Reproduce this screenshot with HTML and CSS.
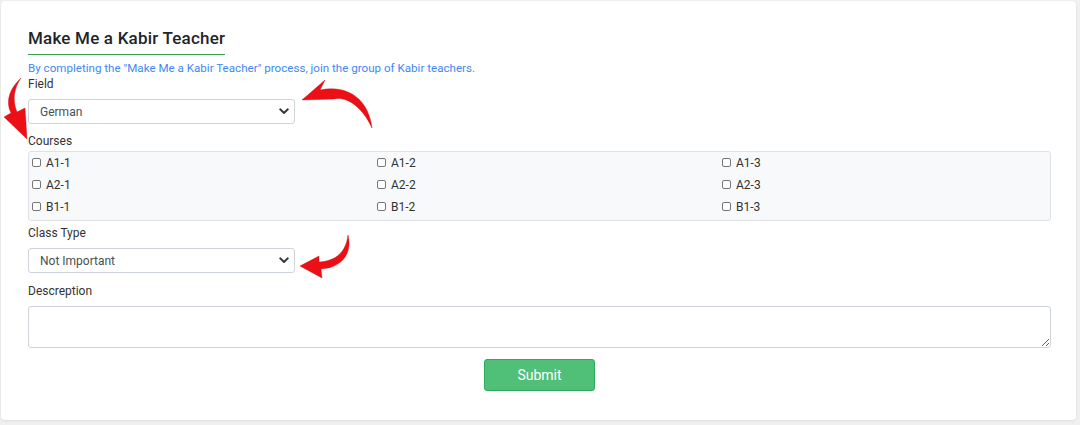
FILE: index.html
```html
<!DOCTYPE html>
<html lang="en">
<head>
    <meta charset="UTF-8">
    <meta name="viewport" content="width=device-width, initial-scale=1.0">
    <title>Make Me a Kabir Teacher</title>
    <link rel="stylesheet" href="styles.css">
</head>
<body>
    <div class="card">
        <h2 class="title">Make Me a Kabir Teacher</h2>
        <p class="intro">By completing the "Make Me a Kabir Teacher" process, join the group of Kabir teachers.</p>

        <form class="teacher-form">
            <label class="field-label">Field</label>
            <div class="select-wrap">
                <select class="form-select">
                    <option>German</option>
                </select>
                <svg class="chevron" width="10" height="7" viewBox="0 0 10 7"><path d="M1.2 1.3 L5 5 L8.8 1.3" fill="none" stroke="#343a40" stroke-width="1.9" stroke-linecap="round" stroke-linejoin="round"/></svg>
            </div>

            <label class="field-label courses-label">Courses</label>
            <div class="courses-box">
                <label class="course"><input type="checkbox"> A1-1</label>
                <label class="course"><input type="checkbox"> A1-2</label>
                <label class="course"><input type="checkbox"> A1-3</label>
                <label class="course"><input type="checkbox"> A2-1</label>
                <label class="course"><input type="checkbox"> A2-2</label>
                <label class="course"><input type="checkbox"> A2-3</label>
                <label class="course"><input type="checkbox"> B1-1</label>
                <label class="course"><input type="checkbox"> B1-2</label>
                <label class="course"><input type="checkbox"> B1-3</label>
            </div>

            <label class="field-label type-label">Class Type</label>
            <div class="select-wrap">
                <select class="form-select">
                    <option>Not Important</option>
                </select>
                <svg class="chevron" width="10" height="7" viewBox="0 0 10 7"><path d="M1.2 1.3 L5 5 L8.8 1.3" fill="none" stroke="#343a40" stroke-width="1.9" stroke-linecap="round" stroke-linejoin="round"/></svg>
            </div>

            <label class="field-label desc-label">Descreption</label>
            <textarea class="form-text"></textarea>

            <div class="actions">
                <button type="button" class="btn-submit">Submit</button>
            </div>
        </form>
    </div>

    <!-- hint arrows drawn over the form -->
    <svg class="arrows" width="1080" height="425" viewBox="0 0 1080 425">
        <path d="M21 78 C10 88 5 101 11 113 L4 117 L27 139 L25 108 L17 112 C12 100 14 88 21 78 Z"/>
        <path d="M302 100 L325 80 L320 90 C348 84 369 100 372 128 C362 106 346 96 334 99 Z"/>
        <path d="M348 235 C353 255 340 268 321 269 L322 278 L300 266 L319 256 L319 262 C336 261 346 252 348 235 Z"/>
    </svg>
</body>
</html>
```

FILE: styles.css
```css
* {
    margin: 0;
    padding: 0;
    box-sizing: border-box;
    font-family: Roboto, "Liberation Sans", Arial, sans-serif;
}

body {
    background-color: #f0f0f0;
    color: #333;
    position: relative;
    width: 1080px;
    height: 425px;
    overflow: hidden;
}

.card {
    margin: 1px 4px 0 1px;
    height: 419px;
    background: #fff;
    border-radius: 4px;
    box-shadow: 0 1px 3px rgba(0, 0, 0, 0.08);
    padding: 27px 24px 0 27px;
}

.title {
    display: inline-block;
    font-size: 17px;
    line-height: 20px;
    font-weight: 500;
    letter-spacing: 0.2px;
    color: #212529;
    padding-bottom: 6px;
    border-bottom: 1px solid #3a9d4f;
}

.intro {
    margin-top: 5px;
    font-size: 11.6px;
    line-height: 16px;
    color: #3f88f5;
}

.teacher-form {
    display: flex;
    flex-direction: column;
    align-items: flex-start;
}

.field-label {
    font-size: 12px;
    line-height: 16px;
    color: #333;
}

.courses-label {
    margin-top: 9px;
}

.type-label {
    margin-top: 4px;
}

.desc-label {
    margin-top: 10px;
}

.select-wrap {
    position: relative;
    margin-top: 7px;
    width: 267px;
}

.form-select {
    appearance: none;
    -webkit-appearance: none;
    width: 100%;
    height: 25px;
    padding: 0 24px 0 11px;
    font-size: 12px;
    color: #495057;
    background: #fff;
    border: 1px solid #ced4da;
    border-radius: 3px;
}

.chevron {
    position: absolute;
    right: 6px;
    top: 9px;
}

.courses-box {
    margin-top: 2px;
    width: 1023px;
    display: grid;
    grid-template-columns: 345px 345px 1fr;
    grid-auto-rows: 22px;
    padding: 0 0 2px 3px;
    background: #f8f9fa;
    border: 1px solid #dee2e6;
    border-radius: 3px;
}

.course {
    display: flex;
    align-items: center;
    gap: 5px;
    font-size: 12px;
    color: #333;
}

.course input {
    appearance: none;
    -webkit-appearance: none;
    width: 9px;
    height: 9px;
    margin-top: -2px;
    background: #fff;
    border: 1px solid #767676;
    border-radius: 2px;
}

.form-text {
    margin-top: 7px;
    width: 1023px;
    height: 42px;
    border: 1px solid #ced4da;
    border-radius: 3px;
    resize: vertical;
}

.actions {
    width: 1023px;
    display: flex;
    justify-content: center;
    margin-top: 11px;
}

.btn-submit {
    width: 111px;
    height: 32px;
    background: #50bf77;
    border: 1px solid #2fa95a;
    border-radius: 3px;
    color: #fff;
    font-size: 14px;
    font-weight: 400;
}

.arrows {
    position: absolute;
    top: 0;
    left: 0;
    pointer-events: none;
}

.arrows path {
    fill: #ec1016;
    stroke: #b80a0f;
    stroke-width: 0.4;
}
```
